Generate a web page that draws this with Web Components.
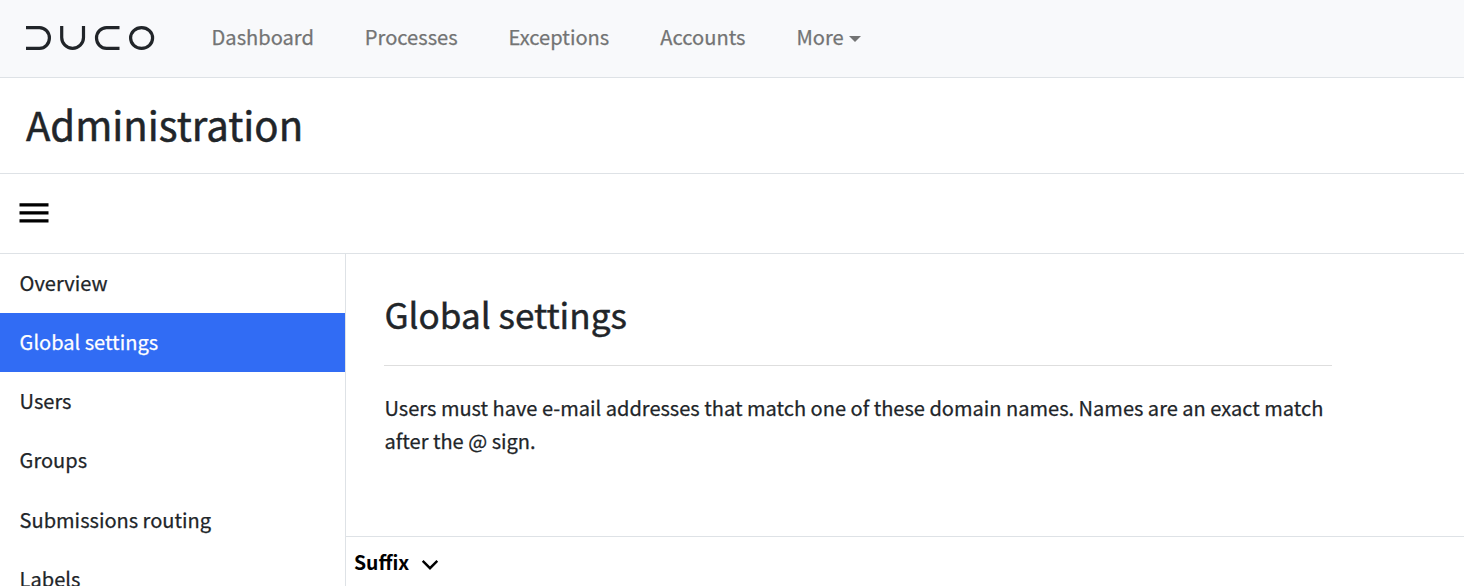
<!DOCTYPE html>
<html lang="en">
<head>
<meta charset="utf-8">
<title>Administration</title>
<style>
    body {
        margin: 0;
        height: 586px;
        overflow: hidden;
        background: #fff;
        color: #212529;
        font-family: "Noto Sans CJK SC", "Noto Sans", sans-serif;
        font-size: 20px;
        -webkit-text-stroke: .25px currentColor;
    }
</style>
</head>
<body>
<admin-app></admin-app>

<script>
class DucoLogo extends HTMLElement {
    constructor() {
        super();
        this.attachShadow({ mode: 'open' }).innerHTML = `
        <style>
            :host { display: block; width: 130px; height: 26px; }
            svg { display: block; }
        </style>
        <svg width="130" height="26" viewBox="0 0 130 26" fill="none" stroke="#212529" stroke-width="3.2" role="img" aria-label="Duco">
            <path d="M1 2.6H14.5A9.9 10.4 0 0 1 14.5 23.4H1"/>
            <path d="M36.7 1V12.5A10.9 10.9 0 0 0 58.5 12.5V1"/>
            <path d="M94.5 2.6H81.5A10 10.4 0 0 0 81.5 23.4H94.5"/>
            <ellipse cx="116.6" cy="13" rx="11" ry="10.4"/>
        </svg>
        `;
    }
}

class NavLink extends HTMLElement {
    constructor() {
        super();
        this.attachShadow({ mode: 'open' }).innerHTML = `
        <style>
            :host { display: flex; align-items: center; color: #737474; font-size: 20.1px; line-height: 30px; white-space: nowrap; }
            .caret { display: none; margin: 5px 0 0 5.5px; border: 6px solid transparent; border-top-color: currentColor; border-bottom: 0; }
            :host([dropdown]) .caret { display: block; }
        </style>
        <slot></slot><span class="caret"></span>
        `;
    }
}

class TopBar extends HTMLElement {
    constructor() {
        super();
        this.attachShadow({ mode: 'open' }).innerHTML = `
        <style>
            :host { display: flex; align-items: center; box-sizing: border-box; height: 78px; padding: 0 25px 2px; background: #f8f9fb; border-bottom: 1px solid #dee2e6; }
            nav { display: flex; gap: 51px; margin-left: 56.5px; padding-bottom: 2px; }
        </style>
        <duco-logo></duco-logo>
        <nav><slot></slot></nav>
        `;
    }
}

class PageTitle extends HTMLElement {
    constructor() {
        super();
        this.attachShadow({ mode: 'open' }).innerHTML = `
        <style>
            :host { display: flex; align-items: center; box-sizing: border-box; height: 96px; padding: 0 26px 4px; border-bottom: 1px solid #dee2e6; }
            h1 { margin: 0; font-size: 40.1px; font-weight: 400; line-height: 48px; -webkit-text-stroke-width: .5px; }
        </style>
        <h1><slot></slot></h1>
        `;
    }
}

class MenuToggle extends HTMLElement {
    constructor() {
        super();
        this.attachShadow({ mode: 'open' }).innerHTML = `
        <style>
            :host { display: flex; align-items: center; box-sizing: border-box; height: 80px; padding: 0 19px 1px; border-bottom: 1px solid #dee2e6; }
        </style>
        <svg width="30" height="20" viewBox="0 0 30 20" fill="#000" aria-label="Menu">
            <path d="M.5 .2h29v3.4H.5zM.5 8.2h29v3.4H.5zM.5 16.2h29v3.4H.5z"/>
        </svg>
        `;
    }
}

class SideItem extends HTMLElement {
    constructor() {
        super();
        this.attachShadow({ mode: 'open' }).innerHTML = `
        <style>
            :host { display: flex; align-items: center; flex: none; box-sizing: border-box; height: 59.2px; padding: 0 0 1.6px 19.6px; font-size: 20.04px; line-height: 30px; }
            :host([active]) { background: #316cf4; color: #fff; }
        </style>
        <slot></slot>
        `;
    }
}

class SideMenu extends HTMLElement {
    constructor() {
        super();
        this.attachShadow({ mode: 'open' }).innerHTML = `
        <style>
            :host { display: flex; flex-direction: column; box-sizing: border-box; overflow: hidden; border-right: 1px solid #dee2e6; }
        </style>
        <slot></slot>
        `;
    }
}

class SettingsPanel extends HTMLElement {
    constructor() {
        super();
        this.attachShadow({ mode: 'open' }).innerHTML = `
        <style>
            :host { display: block; box-sizing: border-box; height: 282px; padding: 36px 132px 0 38px; }
            h2 { margin: 0; padding: 0 0 27px .4px; border-bottom: 1px solid #dedede; font-size: 35.1px; font-weight: 400; line-height: 48px; -webkit-text-stroke-width: .45px; }
            p { margin: 25px 0 0 .5px; font-size: 20.05px; line-height: 33px; }
        </style>
        <h2><slot name="heading"></slot></h2>
        <p><slot></slot></p>
        `;
    }
}

class SortHeader extends HTMLElement {
    constructor() {
        super();
        this.attachShadow({ mode: 'open' }).innerHTML = `
        <style>
            :host { display: flex; align-items: center; gap: 12px; box-sizing: border-box; height: 54px; padding: 0 0 4px 8px; border-top: 1px solid #dee2e6; color: #000; font-size: 19.4px; font-weight: 600; line-height: 30px; -webkit-text-stroke-width: 0; }
            svg { margin-top: 6px; }
        </style>
        <slot></slot>
        <svg width="18" height="12" viewBox="0 0 18 12" fill="none" stroke="#000" stroke-width="2.4">
            <path d="M1.7 1.8L9 9.2L16.3 1.8"/>
        </svg>
        `;
    }
}

class AdminApp extends HTMLElement {
    constructor() {
        super();
        this.attachShadow({ mode: 'open' }).innerHTML = `
        <style>
            :host { display: flex; flex-direction: column; height: 586px; overflow: hidden; }
            .body { display: grid; grid-template-columns: 346px 1fr; flex: 1; min-height: 0; }
            main { min-width: 0; overflow: hidden; }
        </style>
        <top-bar>
            <nav-link>Dashboard</nav-link>
            <nav-link>Processes</nav-link>
            <nav-link>Exceptions</nav-link>
            <nav-link>Accounts</nav-link>
            <nav-link dropdown>More</nav-link>
        </top-bar>
        <page-title>Administration</page-title>
        <menu-toggle></menu-toggle>
        <div class="body">
            <side-menu>
                <side-item>Overview</side-item>
                <side-item active>Global settings</side-item>
                <side-item>Users</side-item>
                <side-item>Groups</side-item>
                <side-item>Submissions routing</side-item>
                <side-item>Labels</side-item>
            </side-menu>
            <main>
                <settings-panel>
                    <span slot="heading">Global settings</span>
                    Users must have e-mail addresses that match one of these domain names. Names are an exact match<br>after the @ sign.
                </settings-panel>
                <sort-header>Suffix</sort-header>
            </main>
        </div>
        `;
    }
}

customElements.define('duco-logo', DucoLogo);
customElements.define('nav-link', NavLink);
customElements.define('top-bar', TopBar);
customElements.define('page-title', PageTitle);
customElements.define('menu-toggle', MenuToggle);
customElements.define('side-item', SideItem);
customElements.define('side-menu', SideMenu);
customElements.define('settings-panel', SettingsPanel);
customElements.define('sort-header', SortHeader);
customElements.define('admin-app', AdminApp);
</script>
</body>
</html>
